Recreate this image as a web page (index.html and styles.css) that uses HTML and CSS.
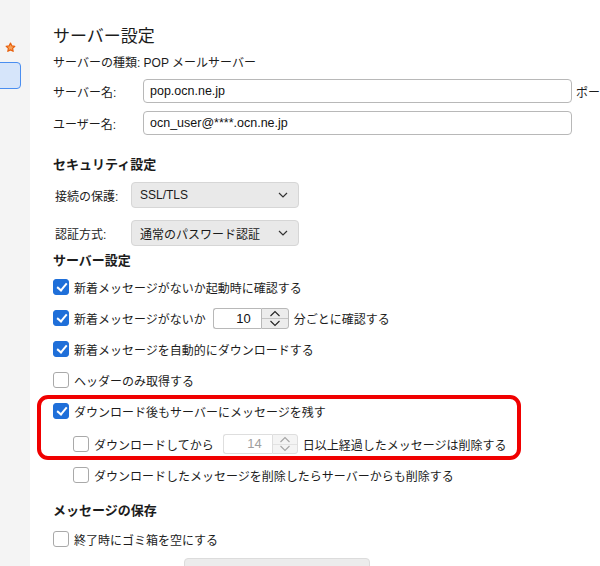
FILE: index.html
```html
<!DOCTYPE html>
<html lang="ja">
<head>
<meta charset="utf-8">
<link rel="stylesheet" href="styles.css">
</head>
<body>
<div class="app">
  <aside class="sidebar">
    <svg class="star" width="11" height="11" viewBox="0 0 12 12"><path d="M6 1.2 L7.4 4.2 L10.7 4.6 L8.3 6.9 L8.9 10.2 L6 8.6 L3.1 10.2 L3.7 6.9 L1.3 4.6 L4.6 4.2 Z" fill="#f8a35a" stroke="#e8610e" stroke-width="1.3" stroke-linejoin="round"/></svg>
    <div class="sel-item"></div>
  </aside>
  <main class="main">
    <h1 class="title">サーバー設定</h1>
    <div class="type">サーバーの種類: POP メールサーバー</div>
    <div class="field">
      <span class="label">サーバー名:</span>
      <div class="input">pop.ocn.ne.jp</div>
      <span class="after">ポート:</span>
    </div>
    <div class="field f2">
      <span class="label">ユーザー名:</span>
      <div class="input">ocn_user@****.ocn.ne.jp</div>
    </div>

    <h2 class="head h-sec">セキュリティ設定</h2>
    <div class="sfield">
      <span class="slabel">接続の保護:</span>
      <div class="select"><span>SSL/TLS</span><svg width="10" height="6" viewBox="0 0 10 6"><path d="M1 1 L5 5 L9 1" fill="none" stroke="#333" stroke-width="1.2"/></svg></div>
    </div>
    <div class="sfield s2">
      <span class="slabel">認証方式:</span>
      <div class="select"><span>通常のパスワード認証</span><svg width="10" height="6" viewBox="0 0 10 6"><path d="M1 1 L5 5 L9 1" fill="none" stroke="#333" stroke-width="1.2"/></svg></div>
    </div>

    <h2 class="head h-srv">サーバー設定</h2>
    <div class="rows">
      <div class="row"><span class="cb on"></span><span>新着メッセージがないか起動時に確認する</span></div>
      <div class="row"><span class="cb on"></span><span>新着メッセージがないか</span>
        <div class="spin"><span class="num">10</span><span class="step"><span class="half"><svg width="12" height="7" viewBox="0 0 12 7"><path d="M1.5 6 L6 1.5 L10.5 6" fill="none" stroke="#222" stroke-width="1.1"/></svg></span><span class="half"><svg width="12" height="7" viewBox="0 0 12 7"><path d="M1.5 1 L6 5.5 L10.5 1" fill="none" stroke="#222" stroke-width="1.1"/></svg></span></span></div>
        <span>分ごとに確認する</span></div>
      <div class="row"><span class="cb on"></span><span>新着メッセージを自動的にダウンロードする</span></div>
      <div class="row"><span class="cb"></span><span>ヘッダーのみ取得する</span></div>
    </div>

    <div class="highlight">
      <div class="row"><span class="cb on"></span><span>ダウンロード後もサーバーにメッセージを残す</span></div>
      <div class="row indent r2"><span class="cb"></span><span>ダウンロードしてから</span>
        <div class="spin dis"><span class="num">14</span><span class="step"><span class="half"><svg width="12" height="7" viewBox="0 0 12 7"><path d="M1.5 6 L6 1.5 L10.5 6" fill="none" stroke="#a5a5a5" stroke-width="1.1"/></svg></span><span class="half"><svg width="12" height="7" viewBox="0 0 12 7"><path d="M1.5 1 L6 5.5 L10.5 1" fill="none" stroke="#a5a5a5" stroke-width="1.1"/></svg></span></span></div>
        <span>日以上経過したメッセージは削除する</span></div>
    </div>
    <div class="row indent r3"><span class="cb"></span><span>ダウンロードしたメッセージを削除したらサーバーからも削除する</span></div>

    <h2 class="head h-msg">メッセージの保存</h2>
    <div class="row r4"><span class="cb"></span><span>終了時にゴミ箱を空にする</span></div>
    <div class="bottom-box"></div>
  </main>
</div>
</body>
</html>
```

FILE: styles.css
```css
html, body {
  margin: 0;
  padding: 0;
  overflow: hidden;
  background: #fff;
}
body {
  font-family: "Liberation Sans", "Noto Sans CJK JP", sans-serif;
  color: #1c1c1c;
  font-size: 12px;
  width: 600px;
  height: 566px;
}
.app {
  display: flex;
  height: 566px;
}
.sidebar {
  width: 30px;
  flex: none;
  background: #f4f4f4;
  display: flex;
  flex-direction: column;
  align-items: flex-start;
}
.star {
  margin: 42px 0 0 5px;
  display: block;
}
.sel-item {
  margin: 9px 0 0 -12px;
  width: 31px;
  height: 25px;
  border: 1.5px solid #4a8ef0;
  border-radius: 4px;
  background: #d6e5fa;
}
.main {
  flex: 1;
  padding: 27px 0 0 23px;
  white-space: nowrap;
  min-width: 0;
  overflow: hidden;
}
.title {
  margin: 0;
  font-size: 17px;
  line-height: 20px;
  font-weight: normal;
  height: 20px;
}
.type {
  margin-top: 8px;
  line-height: 16px;
  height: 16px;
}
.field {
  display: flex;
  align-items: center;
  margin-top: 8px;
  height: 24px;
}
.label {
  width: 90px;
  flex: none;
}
.input {
  width: 421px;
  flex: none;
  height: 22px;
  border: 1px solid #b8b8b8;
  border-radius: 4px;
  padding: 0 0 0 6px;
  line-height: 22px;
  font-size: 12.5px;
  color: #111;
}
.after {
  margin-left: 4px;
  flex: none;
}
.head {
  margin: 0;
  font-size: 13px;
  font-weight: bold;
  line-height: 18px;
  height: 18px;
}
.h-sec { margin-top: 21px; }
.sfield {
  display: flex;
  align-items: center;
  margin-top: 8px;
  height: 26px;
}
.sfield.s2 { margin-top: 12px; }
.slabel {
  width: 76px;
  padding-left: 2px;
  flex: none;
}
.select {
  width: 148px;
  height: 24px;
  border: 1px solid #d6d6d6;
  border-radius: 4px;
  background: #e9e9e9;
  display: flex;
  align-items: center;
  justify-content: space-between;
  padding: 0 10px 0 8px;
  color: #1a1a1a;
}
.h-srv { margin-top: 6px; }
.rows {
  display: flex;
  flex-direction: column;
  gap: 9px;
  margin-top: 6px;
}
.row {
  display: flex;
  align-items: center;
  height: 22px;
  gap: 5px;
}
.cb {
  width: 14px;
  height: 14px;
  border: 1px solid #a9a9a9;
  border-radius: 3px;
  background: #fff;
  flex: none;
  position: relative;
}
.cb.on {
  background: #1f6fd9;
  border-color: #1f6fd9;
}
.cb.on::after {
  content: "";
  position: absolute;
  left: 4.5px;
  top: 1px;
  width: 4px;
  height: 8px;
  border: solid #fff;
  border-width: 0 2px 2px 0;
  transform: rotate(40deg);
}
.spin {
  display: flex;
  height: 21px;
  margin-left: 2px;
}
.spin .num {
  width: 37px;
  border: 1px solid #b8b8b8;
  border-right: none;
  border-radius: 3px 0 0 3px;
  text-align: right;
  padding-right: 10px;
  line-height: 19px;
  font-size: 13px;
  color: #111;
}
.spin .step {
  width: 26px;
  border: 1px solid #b8b8b8;
  border-radius: 0 3px 3px 0;
  background: #ececec;
  display: flex;
  flex-direction: column;
}
.spin .half {
  flex: 1;
  display: flex;
  align-items: center;
  justify-content: center;
}
.spin .half + .half {
  border-top: 1px solid #c4c4c4;
}
.spin .half svg { display: block; }
.spin.dis {
  height: 20px;
  margin-left: 4px;
}
.spin.dis .num {
  width: 38px;
  border-color: #dedede;
  color: #a0a0a0;
  line-height: 18px;
}
.spin.dis .step {
  border-color: #dedede;
  background: #f4f4f4;
  width: 24px;
}
.spin.dis .half + .half {
  border-top-color: #e2e2e2;
}
.highlight {
  margin: 4px 0 0 -16px;
  width: 464px;
  border: 4px solid #f00000;
  border-radius: 11px;
  padding: 1px 0 1px 12px;
}
.indent { padding-left: 20px; }
.r2 { margin-top: 11px; }
.r3 { margin-top: 4px; }
.h-msg { margin-top: 16px; }
.r4 { margin-top: 8px; }
.bottom-box {
  margin: 8px 0 0 131px;
  width: 184px;
  height: 24px;
  background: #ececec;
  border: 1px solid #dcdcdc;
  border-radius: 4px;
}
```
